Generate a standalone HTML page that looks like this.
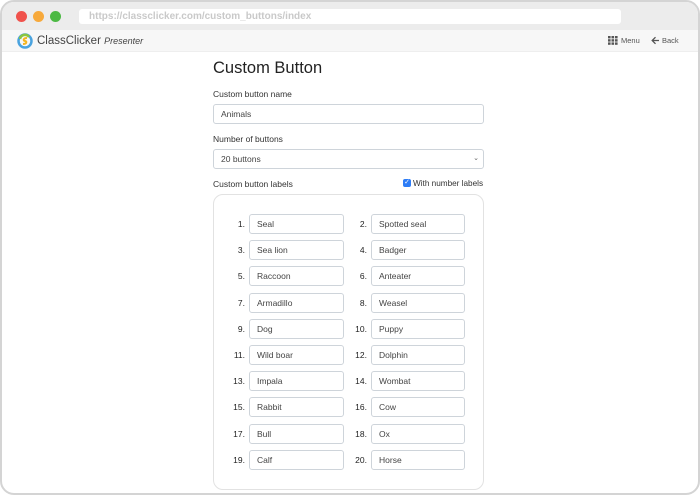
<!DOCTYPE html>
<html><head><meta charset="utf-8"><style>
*{box-sizing:border-box;margin:0;padding:0}
body{width:700px;height:496px;background:#fff;font-family:"Liberation Sans",sans-serif;position:relative;overflow:hidden}
.win{position:absolute;left:0;top:0;width:700px;height:495px;border:2px solid #d4d4d4;border-radius:14px;overflow:hidden;background:#fff}
.title{position:absolute;left:0;top:0;right:0;height:28px;background:#ececec}
.dot{position:absolute;top:9px;width:11px;height:11px;border-radius:50%}
.url{position:absolute;left:77px;top:7px;width:542px;height:15px;background:#fff;border-radius:3px;font-size:10px;font-weight:bold;color:#c9c9c9;padding-left:10px;line-height:15px}
.tool{position:absolute;left:0;top:28px;right:0;height:22px;background:#f7f7f7;border-bottom:1px solid #eee}
.a{position:absolute;font-size:9px;color:#333}
.in{position:absolute;height:20px;border:1px solid #ced4da;border-radius:3px;font-size:8.5px;color:#444;padding-left:7px;line-height:18px;background:#fff}
.n{position:absolute;font-size:8.5px;color:#222;text-align:right;width:30px;line-height:20px}
</style></head><body>
<div class="win">
<div class="title">
<div class="dot" style="left:14px;background:#f0524c"></div>
<div class="dot" style="left:31px;background:#f7a93b"></div>
<div class="dot" style="left:48px;background:#4cb944"></div>
<div class="url">https://classclicker.com/custom_buttons/index</div>
</div>
<div class="tool">
<svg style="position:absolute;left:15px;top:3px" width="16" height="16" viewBox="0 0 16 16"><circle cx="8" cy="8" r="6.5" fill="none" stroke="#4aa3df" stroke-width="2.5"/><path d="M3 6 A5 5 0 0 1 12 4" stroke="#8cc63f" stroke-width="2.5" fill="none"/><path d="M10 5 C6 5 6 8 8 8 C10 8 10 11 6 11" stroke="#f5b620" stroke-width="2" fill="none"/></svg>
<div class="a" style="left:35px;top:5px;font-size:11.5px;color:#444">ClassClicker <i style="font-size:9px">Presenter</i></div>
<svg style="position:absolute;left:606px;top:6px" width="10" height="9"><g fill="#555"><rect x="0" y="0" width="2.6" height="2.4"/><rect x="3.5" y="0" width="2.6" height="2.4"/><rect x="7" y="0" width="2.6" height="2.4"/><rect x="0" y="3.2" width="2.6" height="2.4"/><rect x="3.5" y="3.2" width="2.6" height="2.4"/><rect x="7" y="3.2" width="2.6" height="2.4"/><rect x="0" y="6.4" width="2.6" height="2.4"/><rect x="3.5" y="6.4" width="2.6" height="2.4"/><rect x="7" y="6.4" width="2.6" height="2.4"/></g></svg>
<div class="a" style="left:619px;top:6px;font-size:7.5px;color:#555">Menu</div>
<svg style="position:absolute;left:649px;top:6px" width="9" height="9" viewBox="0 0 9 9"><path d="M8 4.5H1.5M4.5 1.2L1.2 4.5L4.5 7.8" stroke="#555" stroke-width="1.3" fill="none"/></svg>
<div class="a" style="left:660px;top:6px;font-size:7.5px;color:#555">Back</div>
</div>
</div>
<div class="a" style="left:213px;top:59px;font-size:16.5px;color:#222">Custom Button</div>
<div class="a" style="left:213px;top:89px;font-size:8.5px">Custom button name</div>
<div class="in" style="left:213px;top:104px;width:271px">Animals</div>
<div class="a" style="left:213px;top:134px;font-size:8.5px">Number of buttons</div>
<div class="in" style="left:213px;top:149px;width:271px">20 buttons<span style="position:absolute;right:4px;font-size:7px;color:#666">⌄</span></div>
<div class="a" style="left:213px;top:179px;font-size:8.5px">Custom button labels</div>
<div style="position:absolute;left:403px;top:179px;width:8px;height:8px;background:#2d7cf6;border-radius:2px;color:#fff;font-size:7px;line-height:8px;text-align:center">✓</div>
<div class="a" style="left:413px;top:179px;font-size:8.2px">With number labels</div>
<div style="position:absolute;left:213px;top:194px;width:271px;height:296px;border:1px solid #e2e2e2;border-radius:10px"></div>
<div id="rows"></div>
<script>
var L=["Seal","Spotted seal","Sea lion","Badger","Raccoon","Anteater","Armadillo","Weasel","Dog","Puppy","Wild boar","Dolphin","Impala","Wombat","Rabbit","Cow","Bull","Ox","Calf","Horse"];
var h="";
for(var i=0;i<10;i++){var y=214+i*26.2;
h+='<div class="n" style="left:215px;top:'+y+'px">'+(2*i+1)+'.</div><div class="in" style="left:249px;top:'+y+'px;width:95px">'+L[2*i]+'</div>';
h+='<div class="n" style="left:337px;top:'+y+'px">'+(2*i+2)+'.</div><div class="in" style="left:371px;top:'+y+'px;width:94px">'+L[2*i+1]+'</div>';}
document.getElementById("rows").innerHTML=h;
</script>
</body></html>
